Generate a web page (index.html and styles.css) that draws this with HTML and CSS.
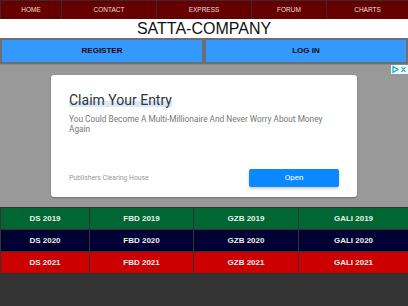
FILE: index.html
```html
<!DOCTYPE html>
<html>
<head>
<meta charset="utf-8">
<link rel="stylesheet" href="styles.css">
</head>
<body>
<nav class="nav">
  <a class="nav-item">HOME</a>
  <a class="nav-item">CONTACT</a>
  <a class="nav-item">EXPRESS</a>
  <a class="nav-item">FORUM</a>
  <a class="nav-item">CHARTS</a>
</nav>
<header class="title">SATTA-COMPANY</header>
<div class="auth">
  <a class="auth-btn">REGISTER</a>
  <a class="auth-btn">LOG IN</a>
</div>
<section class="ad">
  <div class="adchoices">
    <svg width="17" height="9" viewBox="0 0 17 9">
      <rect x="0" y="0" width="17" height="9" fill="#f2f8fb"/>
      <path d="M2 1.5 L7 4.5 L2 7.5 Z" fill="none" stroke="#00aecd" stroke-width="1.2"/>
      <path d="M10.5 2 L14.5 7 M14.5 2 L10.5 7" stroke="#00aecd" stroke-width="1.2"/>
    </svg>
  </div>
  <div class="ad-card">
    <div class="ad-title"><span class="hl">Claim Your Entry</span></div>
    <p class="ad-text">You Could Become A Multi-Millionaire And Never Worry About Money Again</p>
    <div class="ad-foot">
      <span class="ad-brand">Publishers Clearing House</span>
      <span class="ad-open">Open</span>
    </div>
  </div>
</section>
<div class="results">
  <div class="cell green">DS 2019</div>
  <div class="cell green">FBD 2019</div>
  <div class="cell green">GZB 2019</div>
  <div class="cell green">GALI 2019</div>
  <div class="cell navy">DS 2020</div>
  <div class="cell navy">FBD 2020</div>
  <div class="cell navy">GZB 2020</div>
  <div class="cell navy">GALI 2020</div>
  <div class="cell red">DS 2021</div>
  <div class="cell red">FBD 2021</div>
  <div class="cell red">GZB 2021</div>
  <div class="cell red">GALI 2021</div>
</div>
</body>
</html>
```
FILE: styles.css
```css
html, body {
  margin: 0;
  padding: 0;
}
body {
  background: #333333;
  font-family: "Liberation Sans", Arial, sans-serif;
  width: 408px;
  height: 306px;
  overflow: hidden;
}
.nav {
  display: grid;
  grid-template-columns: 60px 94px 94px 74px 1fr;
  gap: 1px;
  padding: 1px 0 0 1px;
  background: #3a2a2a;
}
.nav-item {
  background: #660000;
  color: #f0dede;
  font-size: 6.5px;
  height: 18px;
  line-height: 18px;
  text-align: center;
  text-decoration: none;
}
.title {
  background: #ffffff;
  color: #111;
  font-size: 16px;
  height: 19px;
  line-height: 20px;
  text-align: center;
}
.auth {
  display: grid;
  grid-template-columns: 1fr 1fr;
  height: 26px;
  background: #ffffff;
}
.auth-btn {
  background: #3399ff;
  border: 2px solid #6e6e6e;
  color: #0a0a0a;
  font-weight: bold;
  font-size: 8px;
  line-height: 22px;
  text-align: center;
}
.ad {
  position: relative;
  background: #999999;
  height: 143px;
  padding: 10px 0 0 51px;
  box-sizing: border-box;
  border-top: 1px solid #8a8a8a;
}
.adchoices {
  position: absolute;
  top: 0;
  right: 0;
  line-height: 0;
}
.ad-card {
  width: 306px;
  height: 122px;
  background: #ffffff;
  border-radius: 3px;
  box-shadow: 0 1px 2px rgba(0,0,0,0.25);
  padding: 16px 18px 0 18px;
  box-sizing: border-box;
  font-family: Roboto, "Open Sans", sans-serif;
  display: flex;
  flex-direction: column;
}
.ad-title {
  font-size: 14px;
  line-height: 18px;
  color: #333;
}
.hl {
  background: linear-gradient(to bottom, transparent 55%, #d6e9fb 55%, #d6e9fb 95%, transparent 95%);
}
.ad-text {
  margin: 5px 0 0 0;
  font-size: 8.3px;
  line-height: 10px;
  color: #777;
  width: 272px;
}
.ad-foot {
  margin-top: auto;
  margin-bottom: 10px;
  display: flex;
  justify-content: space-between;
  align-items: center;
}
.ad-brand {
  font-size: 6.8px;
  color: #999;
}
.ad-open {
  width: 90px;
  height: 18px;
  line-height: 18px;
  text-align: center;
  background: #0a88ff;
  color: #fff;
  font-size: 8px;
  border-radius: 2px;
  box-shadow: 0 2px 3px rgba(0,0,0,0.2);
}
.results {
  display: grid;
  grid-template-columns: 88px 103px 104px 1fr;
  gap: 1px;
  padding: 1px 0 1px 1px;
  background: #333333;
}
.cell {
  height: 21px;
  line-height: 21px;
  text-align: center;
  font-weight: bold;
  font-size: 8px;
  color: #eeeeee;
}
.green { background: #006633; }
.navy { background: #000033; }
.red { background: #cc0000; }
```
